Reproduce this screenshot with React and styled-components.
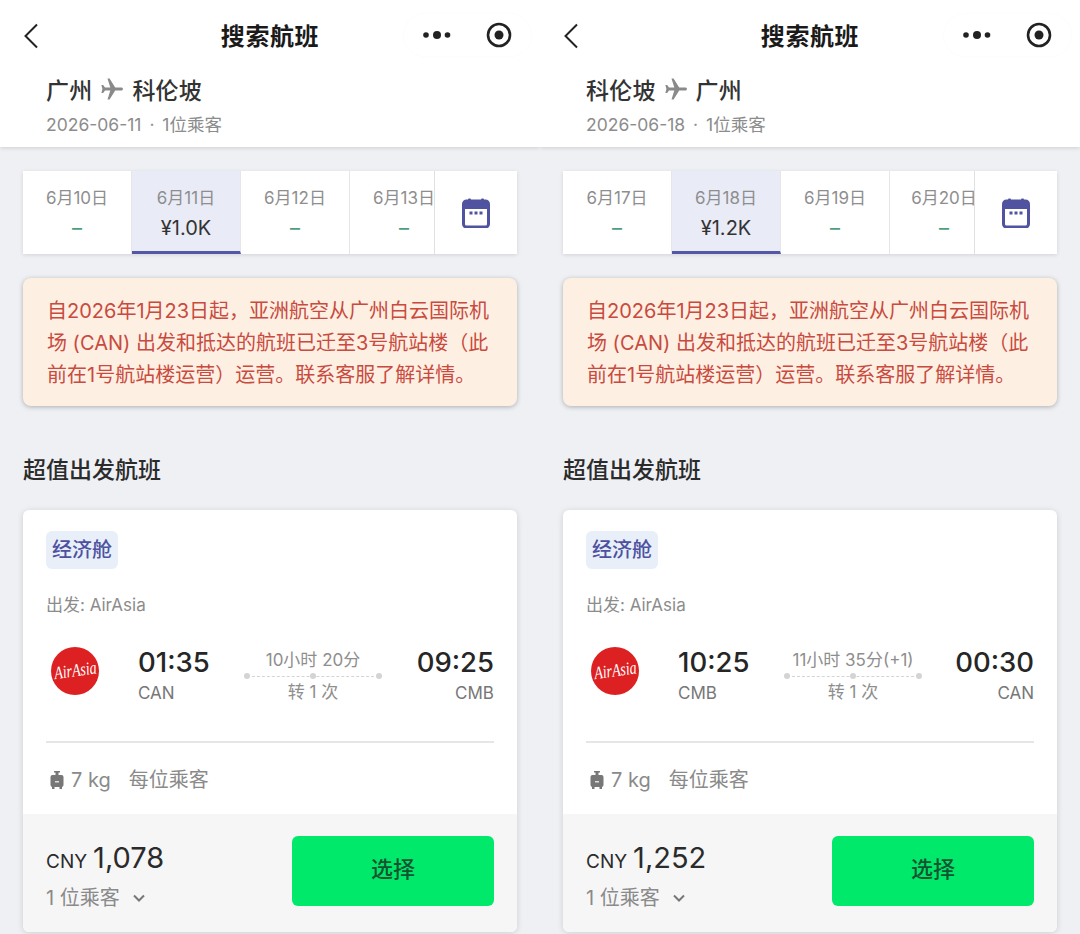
import styled, { createGlobalStyle } from 'styled-components';

const GlobalStyle = createGlobalStyle`
  html, body { margin: 0; padding: 0; background: #eef0f4; }
  body { font-family: Inter, "Noto Sans CJK SC", sans-serif; }
`;

const Page = styled.div`
  display: grid;
  grid-template-columns: 540px 540px;
  width: 1080px;
  height: 934px;
  overflow: hidden;
`;

const Panel = styled.div`
  display: flex;
  flex-direction: column;
  height: 934px;
  overflow: hidden;
  background: #eef0f4;
`;

const Header = styled.header`
  height: 147px;
  flex: none;
  box-sizing: border-box;
  background: #fff;
  box-shadow: 0 1px 4px rgba(0, 0, 0, 0.14);
  position: relative;
`;

const NavBar = styled.div`
  height: 70px;
  display: flex;
  align-items: center;
  justify-content: center;
  position: relative;
`;

const BackIcon = styled.svg`
  position: absolute;
  left: 23px;
  top: 23px;
`;

const Title = styled.h1`
  margin: 0 0 2px;
  font-size: 24px;
  font-weight: 700;
  color: #1a1a1a;
  letter-spacing: 0.6px;
`;

const Capsule = styled.div`
  position: absolute;
  left: 404px;
  top: 14px;
  width: 127px;
  height: 42px;
  display: flex;
  align-items: center;
  justify-content: space-between;
  padding: 0 19px 0 18px;
  box-sizing: border-box;
  border-radius: 21px;
  box-shadow: 0 0 3px rgba(0, 0, 0, 0.03);
`;

const RouteBlock = styled.div`
  padding: 4px 0 0 46px;
`;

const Route = styled.div`
  display: flex;
  align-items: center;
  gap: 8px;
  height: 30px;
  font-size: 23px;
  font-weight: 500;
  color: #333;
  letter-spacing: 0.2px;
`;

const RouteMeta = styled.div`
  margin-top: 9px;
  font-size: 17.5px;
  line-height: 24px;
  color: #8c8c8c;
  word-spacing: 3px;
`;

const Content = styled.main`
  padding: 24px 23px 0;
  display: flex;
  flex-direction: column;
`;

const DateBar = styled.div`
  display: flex;
  height: 83px;
  background: #fff;
  box-shadow: 0 1px 4px rgba(0, 0, 0, 0.12);
`;

const DateScroller = styled.div`
  display: flex;
  width: 411px;
  flex: none;
  overflow: hidden;
`;

const DateCell = styled.div`
  flex: 0 0 109px;
  box-sizing: border-box;
  display: flex;
  flex-direction: column;
  align-items: center;
  padding-top: 15px;
  border-right: 1px solid #e6e6e6;
  background: ${(p) => (p.$active ? '#e9ebf7' : '#fff')};
  border-bottom: ${(p) => (p.$active ? '3px solid #5457a6' : 'none')};
`;

const DateLabel = styled.div`
  font-size: 17px;
  line-height: 24px;
  color: #8e8e8e;
  white-space: nowrap;
`;

const DatePrice = styled.div`
  margin-top: 5px;
  font-size: 20px;
  line-height: 26px;
  color: ${(p) => (p.$empty ? '#4f9d80' : '#333')};
`;

const CalendarCell = styled.div`
  flex: 1;
  display: flex;
  align-items: center;
  justify-content: center;
  border-left: 1px solid #e0e0e0;
`;

const Notice = styled.div`
  margin-top: 24px;
  padding: 17px 24px 16px;
  height: 128px;
  box-sizing: border-box;
  background: #fdf0e3;
  border-radius: 8px;
  box-shadow: 0 1px 5px rgba(0, 0, 0, 0.28);
  color: #c94a3e;
  font-size: 20px;
  line-height: 32px;
  white-space: nowrap;
`;

const SectionTitle = styled.h2`
  margin: 48px 0 0;
  height: 32px;
  font-size: 23px;
  line-height: 32px;
  font-weight: 500;
  color: #2b2b2b;
`;

const Card = styled.section`
  margin-top: 24px;
  height: 422px;
  flex: none;
  background: #fff;
  border-radius: 6px;
  box-shadow: 0 1px 6px rgba(0, 0, 0, 0.14);
  overflow: hidden;
  display: flex;
  flex-direction: column;
`;

const CardBody = styled.div`
  padding: 21px 23px 0;
  flex: 1;
  display: flex;
  flex-direction: column;
  align-items: stretch;
`;

const CabinTag = styled.span`
  align-self: flex-start;
  height: 38px;
  width: 72px;
  padding-bottom: 3px;
  box-sizing: border-box;
  display: flex;
  align-items: center;
  justify-content: center;
  border-radius: 6px;
  background: #e8eff9;
  color: #4d51a0;
  font-size: 20px;
  font-weight: 500;
`;

const Carrier = styled.div`
  margin-top: 24px;
  font-size: 17px;
  line-height: 24px;
  color: #8c8c8c;
`;

const Itinerary = styled.div`
  margin-top: 25px;
  height: 64px;
  display: flex;
  align-items: center;
`;

const Logo = styled.div`
  width: 48px;
  height: 48px;
  margin: -6px 0 0 5px;
  border-radius: 50%;
  background: #dd2021;
  color: #fff;
  flex: none;
  display: flex;
  align-items: center;
  justify-content: center;
  font-family: "Liberation Serif", serif;
  font-style: italic;
  font-size: 14px;
  overflow: hidden;
`;

const LogoText = styled.span`
  transform: rotate(-8deg) scaleY(1.3);
`;

const Stop = styled.div`
  flex: none;
  width: ${(p) => (p.$end ? '77px' : '71px')};
  margin-left: ${(p) => (p.$end ? '0' : '39px')};
  display: flex;
  flex-direction: column;
  align-items: ${(p) => (p.$end ? 'flex-end' : 'flex-start')};
`;

const Time = styled.div`
  font-size: 27.5px;
  line-height: 36px;
  font-weight: 500;
  color: #262626;
  white-space: nowrap;
`;

const Airport = styled.div`
  margin-top: 1px;
  font-size: 17px;
  line-height: 24px;
  color: #777;
`;

const Duration = styled.div`
  flex: 1;
  display: flex;
  flex-direction: column;
  align-items: center;
  padding-top: 4px;
  font-size: 17px;
  line-height: 24px;
  color: #8e8e8e;
  white-space: nowrap;
`;

const Track = styled.div`
  position: relative;
  width: 132px;
  height: 0;
  margin: 4px 0 3px;
  border-top: 1px dashed #d4d4d4;
`;

const TrackDot = styled.i`
  position: absolute;
  top: -4px;
  left: ${(p) => p.$left};
  width: 6px;
  height: 6px;
  margin-left: -3px;
  border-radius: 50%;
  background: #d4d4d4;
`;

const Divider = styled.hr`
  margin: 35px 0 0;
  border: 0;
  border-top: 2px solid #e6e6e6;
`;

const Baggage = styled.div`
  margin-top: 22px;
  display: flex;
  align-items: center;
  font-size: 20px;
  line-height: 30px;
  color: #8a8a8a;
`;

const BaggageNote = styled.span`
  margin-left: 18px;
`;

const BagIcon = styled.svg`
  margin: 0 7px 0 4px;
`;

const Footer = styled.div`
  height: 118px;
  flex: none;
  padding: 22px 23px 0;
  box-sizing: border-box;
  background: #f6f6f7;
  display: flex;
  justify-content: space-between;
  align-items: flex-start;
`;

const PriceBlock = styled.div`
  display: flex;
  flex-direction: column;
`;

const Price = styled.div`
  display: flex;
  align-items: baseline;
  gap: 6px;
  color: #2b2b2b;
  font-size: 19px;
  line-height: 44px;
`;

const Amount = styled.span`
  font-size: 29px;
`;

const Passengers = styled.div`
  display: flex;
  align-items: center;
  gap: 12px;
  margin-top: -1px;
  font-size: 20px;
  line-height: 30px;
  color: #8a8a8a;
`;

const SelectButton = styled.button`
  width: 202px;
  height: 70px;
  padding: 0 0 8px;
  border: 0;
  border-radius: 6px;
  background: #00e96b;
  color: #14532f;
  font-family: inherit;
  font-size: 22px;
  font-weight: 500;
`;

const PlaneIcon = ({ size = 24 }) => (
  <svg width={size} height={size} viewBox="0 0 24 24" fill="#8a8a8a">
    <path d="M23 12c0-.9-.8-1.5-1.7-1.5h-6.1L9.6 1.6H7.5l2.8 8.9H5L3.2 7.9H1.4l1 4.1-1 4.1h1.8L5 13.5h5.3l-2.8 8.9h2.1l5.6-8.9h6.1c.9 0 1.7-.6 1.7-1.5z" />
  </svg>
);

const CalendarIcon = () => (
  <svg width="28" height="30" viewBox="0 0 28 30">
    <rect x="1.5" y="3" width="25" height="26" rx="3" fill="none" stroke="#50539f" strokeWidth="3" />
    <path d="M1.5 6a3 3 0 0 1 3-3h19a3 3 0 0 1 3 3v5h-25z" fill="#50539f" />
    <rect x="6" y="0.5" width="3" height="5" rx="1" fill="#50539f" />
    <rect x="19" y="0.5" width="3" height="5" rx="1" fill="#50539f" />
    <rect x="7.5" y="13.5" width="3" height="3" fill="#50539f" />
    <rect x="12.5" y="13.5" width="3" height="3" fill="#50539f" />
    <rect x="17.5" y="13.5" width="3" height="3" fill="#50539f" />
  </svg>
);

const BagGlyph = () => (
  <BagIcon width="14" height="20" viewBox="0 0 14 20">
    <path d="M4 1h6v1.500H8.500V5h-3V2.500H4z" fill="#777" />
    <rect x="0.500" y="5" width="13" height="12" rx="2" fill="#777" />
    <rect x="2" y="16.500" width="2.500" height="2.500" fill="#777" />
    <rect x="9.500" y="16.500" width="2.500" height="2.500" fill="#777" />
    <rect x="5" y="11" width="4" height="1.500" fill="#ddd" />
  </BagIcon>
);

const trips = [
  {
    from: '广州', to: '科伦坡', meta: '2026-06-11 · 1位乘客',
    dates: [['6月10日', '–'], ['6月11日', '¥1.0K', true], ['6月12日', '–'], ['6月13日', '–']],
    dep: '01:35', depCode: 'CAN', arr: '09:25', arrCode: 'CMB',
    duration: '10小时 20分', amount: '1,078',
  },
  {
    from: '科伦坡', to: '广州', meta: '2026-06-18 · 1位乘客',
    dates: [['6月17日', '–'], ['6月18日', '¥1.2K', true], ['6月19日', '–'], ['6月20日', '–']],
    dep: '10:25', depCode: 'CMB', arr: '00:30', arrCode: 'CAN',
    duration: '11小时 35分(+1)', amount: '1,252',
  },
];

const TripPanel = ({ trip }) => (
  <Panel>
    <Header>
      <NavBar>
        <BackIcon width="16" height="26" viewBox="0 0 16 26" fill="none" stroke="#222" strokeWidth="2">
          <path d="M14 1.500 2.500 13 14 24.500" />
        </BackIcon>
        <Title>搜索航班</Title>
        <Capsule>
          <svg width="30" height="12" viewBox="0 0 30 12" fill="#222">
            <circle cx="4" cy="6" r="2.800" />
            <circle cx="15" cy="6" r="4" />
            <circle cx="25.500" cy="6" r="2.800" />
          </svg>
          <svg width="26" height="26" viewBox="0 0 26 26">
            <circle cx="13" cy="13" r="11" fill="none" stroke="#222" strokeWidth="2.600" />
            <circle cx="13" cy="13" r="4.500" fill="#222" />
          </svg>
        </Capsule>
      </NavBar>
      <RouteBlock>
        <Route>
          <span>{trip.from}</span>
          <PlaneIcon />
          <span>{trip.to}</span>
        </Route>
        <RouteMeta>{trip.meta}</RouteMeta>
      </RouteBlock>
    </Header>

    <Content>
      <DateBar>
        <DateScroller>
          {trip.dates.map(([label, price, active]) => (
            <DateCell key={label} $active={active}>
              <DateLabel>{label}</DateLabel>
              <DatePrice $empty={!active}>{price}</DatePrice>
            </DateCell>
          ))}
        </DateScroller>
        <CalendarCell><CalendarIcon /></CalendarCell>
      </DateBar>

      <Notice>
        自2026年1月23日起，亚洲航空从广州白云国际机<br />
        场 (CAN) 出发和抵达的航班已迁至3号航站楼（此<br />
        前在1号航站楼运营）运营。联系客服了解详情。
      </Notice>

      <SectionTitle>超值出发航班</SectionTitle>

      <Card>
        <CardBody>
          <CabinTag>经济舱</CabinTag>
          <Carrier>出发: AirAsia</Carrier>
          <Itinerary>
            <Logo><LogoText>AirAsia</LogoText></Logo>
            <Stop>
              <Time>{trip.dep}</Time>
              <Airport>{trip.depCode}</Airport>
            </Stop>
            <Duration>
              <span>{trip.duration}</span>
              <Track>
                <TrackDot $left="0" />
                <TrackDot $left="50%" />
                <TrackDot $left="100%" />
              </Track>
              <span>转 1 次</span>
            </Duration>
            <Stop $end>
              <Time>{trip.arr}</Time>
              <Airport>{trip.arrCode}</Airport>
            </Stop>
          </Itinerary>
          <Divider />
          <Baggage>
            <BagGlyph />
            <span>7 kg</span>
            <BaggageNote>每位乘客</BaggageNote>
          </Baggage>
        </CardBody>
        <Footer>
          <PriceBlock>
            <Price>CNY <Amount>{trip.amount}</Amount></Price>
            <Passengers>
              <span>1 位乘客</span>
              <svg width="14" height="10" viewBox="0 0 14 10" fill="none" stroke="#777" strokeWidth="2">
                <path d="M2 2.500 7 7.500 12 2.500" />
              </svg>
            </Passengers>
          </PriceBlock>
          <SelectButton>选择</SelectButton>
        </Footer>
      </Card>
    </Content>
  </Panel>
);

export default function App() {
  return (
    <Page>
      <GlobalStyle />
      {trips.map((trip) => <TripPanel key={trip.meta} trip={trip} />)}
    </Page>
  );
}
